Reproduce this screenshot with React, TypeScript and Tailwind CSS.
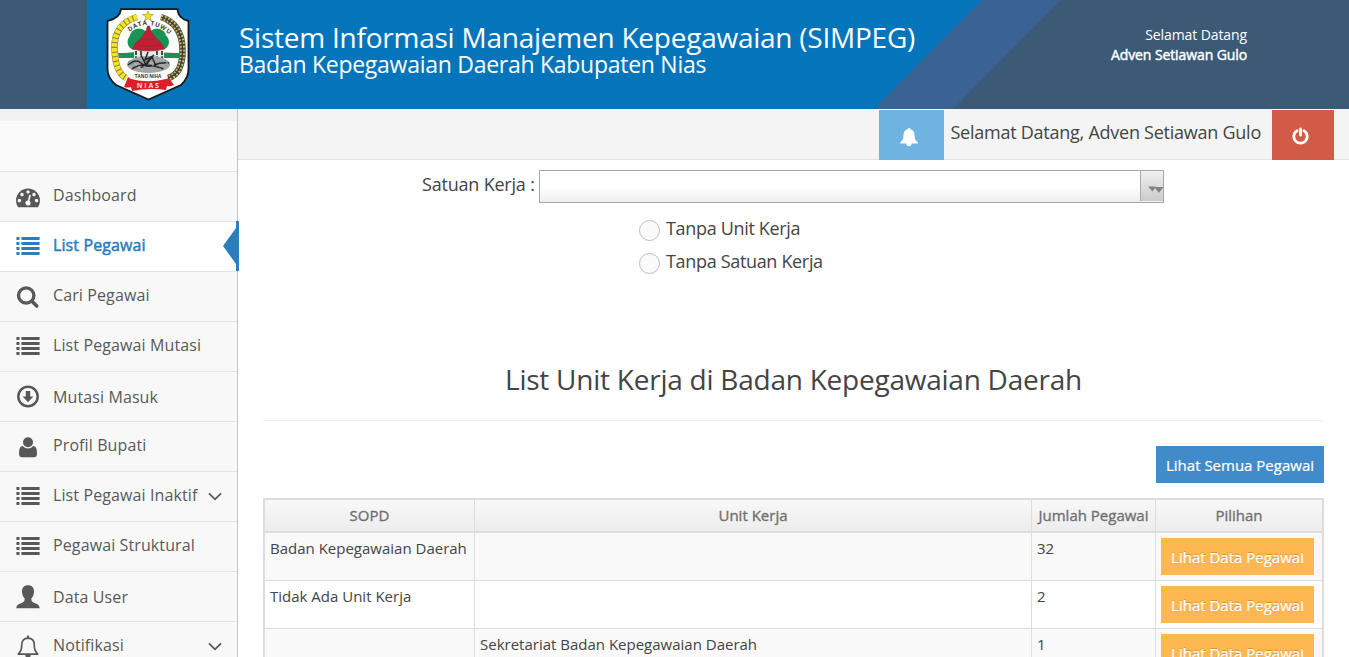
import React from 'react';

type IconProps = { className?: string };

function ListIcon({ className = '' }: IconProps) {
  return (
    <svg className={className} width="24" height="24" viewBox="0 0 24 24" fill="currentColor">
      {[2, 7, 12, 17].map((y) => (
        <g key={y}>
          <rect x="0.4" y={y} width="3.1" height="3" rx="0.4" />
          <rect x="5.4" y={y} width="18.2" height="3" rx="0.4" />
        </g>
      ))}
    </svg>
  );
}

function DashboardIcon() {
  return (
    <svg width="24" height="24" viewBox="0 0 1792 1792" fill="currentColor">
      <path d="M384 1152q0-53-37.500-90.500t-90.500-37.500-90.500 37.500-37.500 90.500 37.500 90.500 90.500 37.500 90.500-37.500 37.500-90.500zm192-448q0-53-37.500-90.500t-90.500-37.500-90.500 37.500-37.500 90.500 37.500 90.500 90.500 37.500 90.500-37.500 37.500-90.500zm428 481l101-382q6-26-7.500-48.500t-38.500-29.500-48 6.500-30 39.500l-101 382q-60 5-107 43.500t-63 98.500q-20 77 20 146t117 89 146-20 89-117q16-60-6-117t-72-91zm660-33q0-53-37.500-90.500t-90.500-37.500-90.500 37.500-37.500 90.500 37.500 90.500 90.500 37.500 90.500-37.500 37.500-90.500zm-640-640q0-53-37.500-90.500t-90.500-37.500-90.500 37.500-37.500 90.500 37.500 90.500 90.500 37.500 90.500-37.500 37.500-90.500zm448 192q0-53-37.500-90.500t-90.500-37.500-90.500 37.500-37.500 90.500 37.500 90.500 90.500 37.500 90.500-37.500 37.500-90.500zm320 448q0 261-141 483-19 29-54 29h-1402q-35 0-54-29-141-221-141-483 0-182 71-348t191-286 286-191 348-71 348 71 286 191 191 286 71 348z" />
    </svg>
  );
}

function SearchIcon() {
  return (
    <svg width="24" height="24" viewBox="0 0 24 24" fill="none" stroke="currentColor">
      <circle cx="10.200" cy="10.500" r="7.700" strokeWidth="3.300" />
      <path d="M16 16.300l4.700 4.700" strokeWidth="3.600" strokeLinecap="round" />
    </svg>
  );
}

function ArrowCircleIcon() {
  return (
    <svg width="24" height="24" viewBox="0 0 24 24">
      <circle cx="12" cy="11.500" r="9.700" fill="none" stroke="currentColor" strokeWidth="2.500" />
      <path d="M9.800 6h4.400v5.500h3.200L12 17.200l-5.400-5.700h3.200z" fill="currentColor" />
    </svg>
  );
}

function UserIcon() {
  return (
    <svg width="24" height="24" viewBox="0 0 24 24" fill="currentColor">
      <circle cx="12" cy="7.200" r="5" />
      <path d="M6.800 11q2.200 2.500 5.200 2.500T17.200 11q3.800 0 3.800 7.200 0 4-2.800 4H5.800Q3 22.200 3 18.200 3 11 6.800 11z" />
    </svg>
  );
}

function PersonIcon() {
  return (
    <svg width="24" height="24" viewBox="0 0 24 24" fill="currentColor">
      <path d="M12 .3c4.200 0 6 2.600 6 6.200 0 3.400-1.300 5.600-2.700 7 0 2.400.5 3.300 2.700 4.200 3.200 1.300 5.400 1.900 5.700 5.600H.3C.6 19.600 2.800 19 6 17.700c2.200-.9 2.700-1.800 2.700-4.200C7.300 12.100 6 9.900 6 6.500 6 2.900 7.800.3 12 .3z" />
    </svg>
  );
}

function BellOutlineIcon() {
  return (
    <svg width="24" height="24" viewBox="0 0 24 24" fill="none" stroke="currentColor">
      <path d="M12 3.200c4.600 0 6.300 3.200 6.300 7.200 0 4.700 1.500 6.700 3.400 8.700H2.300c1.900-2 3.400-4 3.400-8.700 0-4 1.700-7.200 6.300-7.200z" strokeWidth="1.700" strokeLinejoin="round" />
      <path d="M12 1.200v2" strokeWidth="2" strokeLinecap="round" />
      <path d="M9.300 20a2.700 2.700 0 0 0 5.400 0z" fill="currentColor" stroke="none" />
    </svg>
  );
}

function BellIcon() {
  return (
    <svg width="18" height="19" viewBox="0 0 18 19" fill="#fff">
      <path d="M9 0c.8 0 1.300.5 1.300 1.200 3 .6 4.200 2.900 4.200 5.800 0 4 1.100 5.900 3.200 7.200v1.400H.3v-1.400C2.400 12.900 3.500 11 3.500 7c0-2.900 1.200-5.200 4.200-5.800C7.700.5 8.200 0 9 0zM6.400 15.600h5.200a2.600 2.600 0 0 1-5.200 0z" />
    </svg>
  );
}

function PowerIcon() {
  return (
    <svg width="18" height="18" viewBox="0 0 18 18" fill="none" stroke="#fff" strokeWidth="2.800" strokeLinecap="round">
      <path d="M5 3.800a6.700 6.700 0 1 0 7 0M8.500 1.800v6.400" />
    </svg>
  );
}

function Emblem() {
  const dots = Array.from({ length: 15 }, (_, i) => i);
  return (
    <svg width="86" height="94" viewBox="0 0 86 94" className="block">
      <path d="M15.500 1.200Q44 .2 72.500 1.200Q74 11 84 13.500V58Q84 68 78 75Q71 81 43.500 91.500Q16 81 9 75Q3 68 3 58V14Q14 11 15.500 1.200Z" transform="translate(-7 0) scale(1.160 1)" fill="none" />
      <path d="M16 1.200H72.500Q73 10.500 83.500 13V61Q83.500 70 76 77L43.500 91.500L11 77Q2.500 70 2.500 61V13Q15 10.500 16 1.200Z" fill="#fdfdfd" stroke="#171a1c" strokeWidth="1.800" />
      <path d="M32 9Q9 16 9.500 40T21 70" fill="none" stroke="#8b8428" strokeWidth="6.500" />
      <path d="M32 9Q9 16 9.500 40T21 70" fill="none" stroke="#f3e32b" strokeWidth="5.500" strokeDasharray="3.600 1" />
      <path d="M56 9Q77 16 77.500 41T63 70" fill="none" stroke="#57543a" strokeWidth="6.500" />
      <path d="M56 9Q77 16 77.500 41T63 70" fill="none" stroke="#d2ca74" strokeWidth="5" strokeDasharray="1.500 2" />
      <path d="M56 9Q77 16 77.500 41T63 70" fill="none" stroke="#3b3a32" strokeWidth="1.300" />
      <path d="M43 3l1.300 3.300 4.200.2-3.400 2.400 1.300 4-3.400-2.300-3.400 2.300 1.300-4-3.400-2.400 4.200-.2z" fill="#f5df24" stroke="#8c8520" strokeWidth=".5" />
      <path d="M13 45Q27 45 35 43V50H14zM51 44Q66 45 74 45V50H51z" fill="#159453" />
      <circle cx="34" cy="30" r="9.500" fill="#179454" />
      <circle cx="52" cy="30" r="9.500" fill="#179454" />
      <circle cx="30.500" cy="34" r="8" fill="#179454" />
      <circle cx="56" cy="34" r="8" fill="#179454" />
      <path d="M29 41H59V54H29z" fill="#e9e9e7" />
      <path d="M42.500 18h2q1 8 12 17l3 6q-16 4-32 0l3-6Q41 27 42.500 18z" fill="#c21f35" stroke="#7c3034" strokeWidth=".7" />
      <path d="M31 37Q43 40 56 37M36 31Q43 33 51 31" fill="none" stroke="#84313a" strokeWidth=".8" />
      <path d="M31 43V55M36 43V53M52 43V53M57 43V55" stroke="#222" strokeWidth="1.600" strokeDasharray="4 1.200" />
      <ellipse cx="43.500" cy="56.500" rx="21.500" ry="8.500" fill="#a3a5a4" />
      <path d="M23 57Q31 50 36 55T49 57T64 55M27 61Q37 53 59 61M36 47l5 10 6-8 4 9M36 60l13-13M43 44l-3 8 8-4" fill="none" stroke="#24282b" strokeWidth="1.500" />
      {dots.map((i) => (
        <circle key={i} cx={24 + ((i * 7) % 39)} cy={54 + ((i * 3) % 8)} r=".8" fill={i % 2 ? '#d8d8d8' : '#777'} />
      ))}
      <path id="motto-arc" d="M24.500 24Q43 9 63.500 26" fill="none" />
      <text fontFamily="Open Sans, sans-serif" fontSize="6.200" fontWeight="700" fill="#373b3d" letterSpacing=".8">
        <textPath href="#motto-arc">DATA TUWU</textPath>
      </text>
      <text x="43" y="69.500" textAnchor="middle" fontFamily="Open Sans, sans-serif" fontSize="4.600" fontWeight="700" fill="#333">TANO NIHA</text>
      <path d="M23 69l3 2Q43 75.500 61 71l3-1 5 7q-4 2-7 1l-1 4Q43 79.500 27 83l-1-4q-3 1-7 0z" fill="#dc2029" />
      <text x="43.800" y="79.600" textAnchor="middle" fontFamily="Open Sans, sans-serif" fontSize="7" fontWeight="700" fill="#f7dbd6" letterSpacing="1.800">NIAS</text>
    </svg>
  );
}

type MenuItem = { label: string; icon: React.ReactNode; active?: boolean; sub?: boolean; low?: boolean };

const menu: MenuItem[] = [
  { label: 'Dashboard', icon: <DashboardIcon /> },
  { label: 'List Pegawai', icon: <ListIcon />, active: true },
  { label: 'Cari Pegawai', icon: <SearchIcon /> },
  { label: 'List Pegawai Mutasi', icon: <ListIcon /> },
  { label: 'Mutasi Masuk', icon: <ArrowCircleIcon />, low: true },
  { label: 'Profil Bupati', icon: <UserIcon /> },
  { label: 'List Pegawai Inaktif', icon: <ListIcon />, sub: true },
  { label: 'Pegawai Struktural', icon: <ListIcon /> },
  { label: 'Data User', icon: <PersonIcon />, low: true },
  { label: 'Notifikasi', icon: <BellOutlineIcon />, sub: true },
];

function Sidebar() {
  return (
    <nav className="h-[548px] w-[238px] shrink-0 border-r border-[#c4c4c4] bg-[#f2f2f2] pt-3">
      <div className="h-[50px] bg-[#fafafa]" />
      {menu.map((item) => (
        <div
          key={item.label}
          className={`relative flex h-[50px] items-start border-t border-[#e2e2e2] pl-4 ${
            item.active ? 'bg-white text-[#2b7dbc]' : 'bg-[#f8f8f8] text-[#585858]'
          }`}
        >
          <span className="mt-[13px] w-[37px]">{item.icon}</span>
          <span
            className={`text-[16px] leading-[24px] tracking-[0.11px] ${item.low ? 'mt-[13px]' : 'mt-[11px]'} ${
              item.active ? '[-webkit-text-stroke:0.5px_currentColor]' : ''
            }`}
          >
            {item.label}
          </span>
          {item.sub && (
            <svg className="absolute top-[20px] left-[208px]" width="14" height="9" viewBox="0 0 14 9" fill="none" stroke="#585858" strokeWidth="1.800">
              <path d="M1 1.300l6 6 6-6" />
            </svg>
          )}
          {item.active && (
            <svg className="absolute -top-px -right-[2px]" width="16" height="50" viewBox="0 0 16 50">
              <path d="M0 25L13 7V43z" fill="#2b7dbc" />
              <path d="M13 0H16V50H13z" fill="#2b7dbc" />
            </svg>
          )}
        </div>
      ))}
    </nav>
  );
}

const rows = [
  { sopd: 'Badan Kepegawaian Daerah', unit: '', total: 32 },
  { sopd: 'Tidak Ada Unit Kerja', unit: '', total: 2 },
  { sopd: '', unit: 'Sekretariat Badan Kepegawaian Daerah', total: 1 },
];

export default function App() {
  return (
    <div className="flex h-[657px] w-[1349px] flex-col overflow-hidden bg-white font-['Open_Sans',sans-serif] text-[#444]">
      <header className="relative flex h-[109px] shrink-0 bg-[#3c5976] text-white">
        <svg className="absolute top-0 left-[87px]" width="974" height="109" viewBox="0 0 974 109">
          <path d="M0 0H974L866 109H0z" fill="#3a6292" />
          <path d="M0 0H895L787 109H0z" fill="#0575bb" />
        </svg>
        <div className="relative flex w-full pl-[105px]">
          <div className="mt-[8px] h-[94px] w-[134px]">
            <Emblem />
          </div>
          <div className="pt-[23px] whitespace-nowrap">
            <div className="text-[28px] leading-[28px] tracking-[-0.24px]"><span>Sistem Informasi Manajemen Kepegawaian (SIMPEG)</span></div>
            <div className="text-[23px] leading-[27px] tracking-[-0.27px]"><span>Badan Kepegawaian Daerah Kabupaten Nias</span></div>
          </div>
          <div className="mr-[102px] ml-auto pt-[25px] text-right text-[14px] leading-[20px] tracking-[-0.1px] whitespace-nowrap">
            <div>Selamat Datang</div>
            <div className="[-webkit-text-stroke:0.45px_currentColor]"><span>Adven Setiawan Gulo</span></div>
          </div>
        </div>
      </header>

      <div className="flex min-h-0 flex-1">
        <Sidebar />
        <main className="flex-1 whitespace-nowrap">
          <div className="flex h-[51px] justify-end border-b border-[#e3e3e3] bg-[#f4f4f4] pt-px pr-[15px]">
            <div className="flex h-[50px] w-[65px] shrink-0 pt-[18px] pl-[21px] bg-[#6fb3e0]">
              <BellIcon />
            </div>
            <div className="w-[328px] pt-[9px] pl-[6.5px] text-[18px] leading-[27px] tracking-[-0.25px]"><span>Selamat Datang, Adven Setiawan Gulo</span></div>
            <div className="h-[50px] w-[62px] shrink-0 bg-[#d15b47] pt-[17px] pl-[20px]">
              <PowerIcon />
            </div>
          </div>

          <div className="flex pt-[10px] pl-[184px]">
            <div className="w-[117px] pt-px text-[18px] leading-[27px] tracking-[-0.2px]"><span>Satuan Kerja :</span></div>
            <div className="flex h-[33px] w-[625px] justify-end border border-[#a8a8a8] bg-linear-to-b from-white from-50% to-[#eeeeee]">
              <div className="flex h-[30px] w-[23px] items-center overflow-hidden border-l border-[#aaa] bg-linear-to-b from-[#f0f0f0] to-[#cccccc] pt-[6px] pl-[7px]">
                <svg width="16" height="7" viewBox="0 0 16 7" className="shrink-0" fill="#848484">
                  <path d="M0 .5h8L4.500 5.500zM6 1h10L10.800 6.800z" />
                </svg>
              </div>
            </div>
          </div>
          <div className="flex flex-col pt-[12px] pl-[401px]">
            {['Tanpa Unit Kerja', 'Tanpa Satuan Kerja'].map((label) => (
              <label key={label} className="flex h-[33px] text-[18px] leading-[27px] tracking-[-0.33px]">
                <span className="mt-[5px] mr-[6px] size-[21px] rounded-full border border-[#bdbdbd] bg-[#fafafa]" />
                <span>{label}</span>
              </label>
            ))}
          </div>

          <div className="mt-[74px] mr-[25px] ml-[25px] h-[66px] border-b border-[#ececec] pt-[4px] text-center text-[28px] leading-[40px] tracking-[-0.24px]">
            <span>List Unit Kerja di Badan Kepegawaian Daerah</span>
          </div>

          <div className="mt-[25px] mr-[25px] flex justify-end">
            <button className="h-[37px] w-[168px] bg-[#428bca] text-[15px] leading-[20px] text-white [-webkit-text-stroke:0.2px_currentColor]"><span>Lihat Semua Pegawai</span></button>
          </div>

          <table className="mt-[15px] ml-[25px] w-[1061px] table-fixed border-separate border-spacing-0 border-2 border-b-0 border-[#dddddd] text-[15px]">
            <colgroup>
              <col className="w-[210px]" />
              <col className="w-[557px]" />
              <col className="w-[124px]" />
              <col className="w-[166px]" />
            </colgroup>
            <thead>
              <tr className="h-[33px] bg-linear-to-b from-[#f8f8f8] to-[#ececec] text-[#707070]">
                {['SOPD', 'Unit Kerja', 'Jumlah Pegawai', 'Pilihan'].map((h) => (
                  <th key={h} className="border-r border-b-2 border-[#dddddd] p-0 pb-[2px] leading-[20px] font-normal [-webkit-text-stroke:0.35px_currentColor] last:border-r-0"><span>{h}</span></th>
                ))}
              </tr>
            </thead>
            <tbody>
              {rows.map((r) => (
                <tr key={r.total} className="h-[48px] odd:bg-[#f9f9f9]">
                  <td className="border-r border-b border-[#dddddd] px-[5px] pt-[5px] align-top leading-[20px]"><span>{r.sopd}</span></td>
                  <td className="border-r border-b border-[#dddddd] px-[5px] pt-[5px] align-top leading-[20px]"><span>{r.unit}</span></td>
                  <td className="border-r border-b border-[#dddddd] px-[5px] pt-[5px] align-top leading-[20px]">{r.total}</td>
                  <td className="border-b border-[#dddddd] px-[5px] pt-[5px] pb-[5px] align-top">
                    <button className="block h-[37px] w-[153px] bg-[#ffb752] text-[15px] leading-[20px] text-white [-webkit-text-stroke:0.2px_currentColor] [text-shadow:0_-1px_0_rgba(0,0,0,0.2)]"><span>Lihat Data Pegawai</span></button>
                  </td>
                </tr>
              ))}
            </tbody>
          </table>
        </main>
      </div>
    </div>
  );
}
